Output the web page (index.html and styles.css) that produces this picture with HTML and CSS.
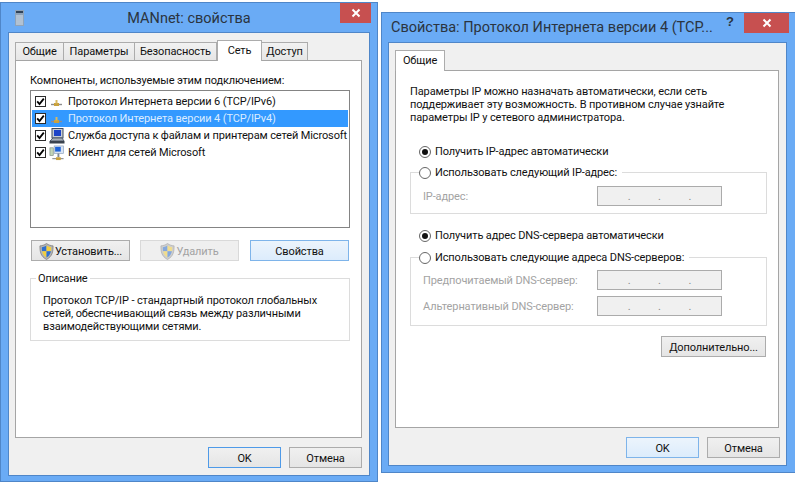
FILE: index.html
```html
<!DOCTYPE html>
<html lang="ru">
<head>
    <meta charset="UTF-8">
    <title>MANnet: свойства</title>
    <link rel="stylesheet" href="styles.css">
</head>
<body>

    <svg class="defs" width="0" height="0">
        <defs>
            <symbol id="check" viewBox="0 0 11 11">
                <rect x="0.5" y="0.5" width="10" height="10" fill="#fff" stroke="#2c2c2c"/>
                <path d="M2.2 5.4 L4.5 8 L8.8 2.6" fill="none" stroke="#000" stroke-width="1.8"/>
            </symbol>
            <symbol id="net" viewBox="0 0 16 16">
                <path d="M2 10.5 H13" stroke="#8d8d8d" stroke-width="1.4"/>
                <rect x="5" y="9" width="5" height="3" fill="#c9a13c"/>
                <rect x="6.5" y="6" width="2" height="3.5" fill="#d8b860"/>
            </symbol>
            <symbol id="pc" viewBox="0 0 16 16">
                <rect x="3" y="0.5" width="11" height="9.5" fill="#c6ccd4" stroke="#3d4a5c"/>
                <rect x="5" y="2" width="7" height="6" fill="#1c43c8"/>
                <path d="M4 10 H13 L15 13 H1 Z" fill="#a8afb8" stroke="#3d4a5c" stroke-width="0.8"/>
                <rect x="0.5" y="13" width="15" height="2.5" fill="#39424e"/>
            </symbol>
            <symbol id="client" viewBox="0 0 16 17">
                <rect x="0.5" y="3" width="3.5" height="8" fill="#c3d6b8" stroke="#7b8a80" stroke-width="0.7"/>
                <rect x="5" y="1" width="10" height="8" fill="#d8e4f4" stroke="#8ba0bb" stroke-width="0.7"/>
                <rect x="6" y="2" width="6" height="5" fill="#1d62d8"/>
                <rect x="8.5" y="9" width="2" height="4" fill="#7d8794"/>
                <path d="M3 14.5 H15" stroke="#8d8d8d" stroke-width="1.2"/>
                <rect x="7" y="13" width="5" height="3" fill="#c9a13c"/>
            </symbol>
            <symbol id="shield" viewBox="0 0 16 18">
                <path d="M8 0.5 C5.5 2.2 3.5 2.8 1 3 C1 9 1.5 14 8 17.5 C14.5 14 15 9 15 3 C12.5 2.8 10.5 2.2 8 0.5 Z" fill="#b5b5b5" stroke="#7c7c7c" stroke-width="0.8"/>
                <path d="M8 2.5 C6 3.7 4.5 4.2 3 4.4 C3 6 3 7.4 3.3 8.8 H8 Z" fill="#2d6fd0"/>
                <path d="M8 2.5 C10 3.7 11.5 4.2 13 4.4 C13 6 13 7.4 12.7 8.8 H8 Z" fill="#f3cf3e"/>
                <path d="M3.3 8.8 H8 V15.4 C5.2 13.8 3.9 11.5 3.3 8.8 Z" fill="#f3cf3e"/>
                <path d="M12.7 8.8 H8 V15.4 C10.8 13.8 12.1 11.5 12.7 8.8 Z" fill="#2d6fd0"/>
            </symbol>
            <symbol id="x" viewBox="0 0 10 10">
                <path d="M1.5 1.5 L8.5 8.5 M8.5 1.5 L1.5 8.5" stroke="#fff" stroke-width="2"/>
            </symbol>
        </defs>
    </svg>

    <div class="window window-net">
        <svg class="win-icon" width="9" height="16" viewBox="0 0 9 16">
            <rect x="0" y="0" width="9" height="16" fill="#8fa3b8"/>
            <rect x="1" y="1" width="7" height="2" fill="#2f4258"/>
            <path d="M1 6 H8 M1 8 H8 M1 10 H8 M1 12 H8 M1 14 H8" stroke="#d4e0ec" stroke-width="1"/>
        </svg>
        <div class="titlebar titlebar-center">MANnet: свойства</div>
        <div class="close close-net"><svg width="10" height="10"><use href="#x"/></svg></div>

        <div class="client client-net">
            <div class="tabs">
                <div class="tab tab-w48">Общие</div>
                <div class="tab tab-w70">Параметры</div>
                <div class="tab tab-w82">Безопасность</div>
                <div class="tab tab-active tab-w45">Сеть</div>
                <div class="tab tab-w46">Доступ</div>
            </div>
            <div class="panel panel-net">
                <p class="caption">Компоненты, используемые этим подключением:</p>
                <div class="list">
                    <div class="row">
                        <svg class="cb"><use href="#check"/></svg>
                        <svg class="row-icon"><use href="#net"/></svg>
                        <span>Протокол Интернета версии 6 (TCP/IPv6)</span>
                    </div>
                    <div class="row row-selected">
                        <svg class="cb"><use href="#check"/></svg>
                        <svg class="row-icon"><use href="#net"/></svg>
                        <span>Протокол Интернета версии 4 (TCP/IPv4)</span>
                    </div>
                    <div class="row">
                        <svg class="cb"><use href="#check"/></svg>
                        <svg class="row-icon"><use href="#pc"/></svg>
                        <span>Служба доступа к файлам и принтерам сетей Microsoft</span>
                    </div>
                    <div class="row">
                        <svg class="cb"><use href="#check"/></svg>
                        <svg class="row-icon"><use href="#client"/></svg>
                        <span>Клиент для сетей Microsoft</span>
                    </div>
                </div>
                <div class="list-buttons">
                    <div class="btn btn-list btn-shield"><svg class="shield"><use href="#shield"/></svg>Установить...</div>
                    <div class="btn btn-list btn-shield btn-disabled"><svg class="shield shield-off"><use href="#shield"/></svg>Удалить</div>
                    <div class="btn btn-list btn-focus btn-props">Свойства</div>
                </div>
                <fieldset class="group group-desc">
                    <legend class="legend-desc">Описание</legend>
                    <p>Протокол TCP/IP - стандартный протокол глобальных<br>сетей, обеспечивающий связь между различными<br>взаимодействующими сетями.</p>
                </fieldset>
            </div>
            <div class="dialog-buttons">
                <div class="btn btn-dialog btn-ok-net">OK</div>
                <div class="btn btn-dialog">Отмена</div>
            </div>
        </div>
    </div>

    <div class="window window-ip">
        <div class="titlebar titlebar-left">Свойства: Протокол Интернета версии 4 (TCP...</div>
        <div class="help">?</div>
        <div class="close close-ip"><svg width="10" height="10"><use href="#x"/></svg></div>

        <div class="client client-ip">
            <div class="tabs">
                <div class="tab tab-active tab-w50">Общие</div>
            </div>
            <div class="panel panel-ip">
                <p class="intro">Параметры IP можно назначать автоматически, если сеть<br>поддерживает эту возможность. В противном случае узнайте<br>параметры IP у сетевого администратора.</p>

                <div class="option option-first"><span class="radio radio-on"></span>Получить IP-адрес автоматически</div>
                <fieldset class="group group-ip">
                    <legend class="option"><span class="radio"></span>Использовать следующий IP-адрес:</legend>
                    <div class="field">
                        <span class="field-label">IP-адрес:</span>
                        <div class="ip-input"><i>.</i><i>.</i><i>.</i></div>
                    </div>
                </fieldset>

                <div class="option option-dns"><span class="radio radio-on"></span>Получить адрес DNS-сервера автоматически</div>
                <fieldset class="group group-dns">
                    <legend class="option"><span class="radio"></span>Использовать следующие адреса DNS-серверов:</legend>
                    <div class="field">
                        <span class="field-label">Предпочитаемый DNS-сервер:</span>
                        <div class="ip-input"><i>.</i><i>.</i><i>.</i></div>
                    </div>
                    <div class="field">
                        <span class="field-label">Альтернативный DNS-сервер:</span>
                        <div class="ip-input"><i>.</i><i>.</i><i>.</i></div>
                    </div>
                </fieldset>

                <div class="advanced-row">
                    <div class="btn btn-advanced">Дополнительно...</div>
                </div>
            </div>
            <div class="dialog-buttons">
                <div class="btn btn-dialog btn-focus btn-ok-ip">OK</div>
                <div class="btn btn-dialog">Отмена</div>
            </div>
        </div>
    </div>

</body>
</html>
```

FILE: styles.css
```css
* {
    box-sizing: border-box;
}
body {
    margin: 0;
    width: 795px;
    height: 485px;
    overflow: hidden;
    position: relative;
    background: #fff;
    color: #111;
    font-family: Roboto, "Liberation Sans", sans-serif;
    font-size: 11px;
    letter-spacing: -0.12px;
}
p {
    margin: 0;
}
.defs {
    position: absolute;
}

/* windows sit on a free desktop */
.window {
    position: absolute;
    background: #6aabf5;
    border: 1px solid #4f86c8;
}
.window-net {
    left: 0;
    top: 2px;
    width: 378px;
    height: 480px;
}
.window-ip {
    left: 381px;
    top: 12px;
    width: 415px;
    height: 461px;
}
.titlebar {
    height: 29px;
    line-height: 29px;
    font-size: 14.5px;
    letter-spacing: 0;
    color: #2b3440;
}
.titlebar-center {
    text-align: center;
    padding-top: 1px;
}
.titlebar-left {
    padding-left: 9px;
}
.win-icon {
    position: absolute;
    left: 14px;
    top: 7px;
}
.close {
    position: absolute;
    top: 0;
    height: 20px;
    background: #c75050;
    display: flex;
    align-items: center;
    justify-content: center;
}
.close-net {
    right: 6px;
    width: 31px;
}
.close-ip {
    right: 6px;
    width: 45px;
}
.help {
    position: absolute;
    left: 344px;
    top: 1px;
    font-family: "Liberation Sans", sans-serif;
    font-weight: bold;
    font-size: 13px;
    color: #2b3440;
}
.client {
    background: #f0f0f0;
    border: 1px solid #4f86c8;
    margin-left: 7px;
    padding-top: 7px;
    padding-left: 6px;
}
.client-net {
    width: 362px;
    height: 444px;
}
.client-ip {
    margin-left: 6px;
    width: 399px;
    height: 424px;
}

/* tabs */
.tabs {
    display: flex;
    height: 20px;
    align-items: flex-end;
}
.tab {
    height: 18px;
    line-height: 18px;
    text-align: center;
    border: 1px solid #acacac;
    border-bottom: none;
    border-left: none;
    background: linear-gradient(#f2f2f2, #e6e6e6);
}
.tab:first-child {
    border-left: 1px solid #acacac;
}
.tab-active {
    height: 21px;
    line-height: 20px;
    background: #fff;
    border-left: 1px solid #acacac;
    margin-bottom: -1px;
    position: relative;
    z-index: 1;
}
.tab-w48 { width: 49px; }
.tab-w70 { width: 71px; }
.tab-w82 { width: 82px; }
.tab-w45 { width: 45px; }
.tab-w46 { width: 46px; }
.tab-w50 { width: 50px; }
.panel {
    background: #fff;
    border: 1px solid #a5a5a5;
    padding-left: 14px;
}
.panel-net {
    width: 347px;
    height: 378px;
    padding-top: 13px;
}
.panel-ip {
    width: 384px;
    height: 358px;
    padding-top: 14px;
}
.caption,
.intro {
    line-height: 13px;
}

/* component list */
.list {
    width: 320px;
    height: 138px;
    margin-top: 3px;
    padding: 2px 1px;
    border: 1px solid #848484;
}
.row {
    display: flex;
    align-items: center;
    height: 17px;
    padding-left: 3px;
    white-space: nowrap;
}
.row-selected {
    background: #3399ff;
    color: #dcecff;
}
.cb {
    width: 11px;
    height: 11px;
    flex: none;
}
.row-icon {
    width: 16px;
    height: 16px;
    flex: none;
    margin: 0 3px 0 3px;
}
.list-buttons {
    display: flex;
    gap: 10px;
    margin: 12px 0 9px 1px;
}

/* buttons */
.btn {
    height: 21px;
    line-height: 19px;
    padding-top: 1px;
    text-align: center;
    border: 1px solid #acacac;
    background: linear-gradient(#f0f0f0, #e5e5e5);
    white-space: nowrap;
}
.btn-list {
    width: 99px;
}
.btn-shield {
    display: flex;
    align-items: center;
    justify-content: center;
}
.btn-disabled {
    border-color: #d9d9d9;
    background: #efefef;
    color: #a3a3a3;
}
.btn-focus {
    border-color: #7eb4ea;
    background: linear-gradient(#ecf4fc, #dcecfc);
}
.btn-props {
    margin-left: 1px;
}
.shield {
    width: 15px;
    height: 17px;
    flex: none;
    margin-right: 1px;
}
.shield-off {
    opacity: 0.55;
}
.dialog-buttons {
    display: flex;
    gap: 8px;
    justify-content: flex-end;
    margin-top: 9px;
}
.btn-dialog {
    width: 73px;
}
.btn-ok-net {
    border-color: #4e9ae8;
}
.client-net .dialog-buttons {
    margin-right: 7px;
}
.client-ip .dialog-buttons {
    margin-right: 6px;
}
.btn-advanced {
    width: 105px;
}

/* groups, legend padding-top drops the text onto the border line */
.group {
    margin: 0;
    padding: 0;
    border: 1px solid #dcdcdc;
    min-width: 0;
}
.group-desc {
    width: 320px;
    padding: 8px 8px 7px 12px;
    line-height: 13px;
}
.legend-desc {
    margin-left: -7px;
    padding: 2px 2px 0;
    line-height: 14px;
}
.group-ip {
    width: 357px;
    margin-top: 3px;
    padding: 5px 44px 7px 12px;
}
.group-dns {
    width: 357px;
    margin-top: 4px;
    padding: 4px 44px 9px 12px;
}
.option {
    display: flex;
    align-items: center;
    height: 16px;
    line-height: 16px;
    white-space: nowrap;
    padding: 0 5px 0 0;
}
legend.option {
    height: 18px;
    margin-left: -4px;
    padding-top: 2px;
}
.option-first {
    margin: 20px 0 0 9px;
}
.option-dns {
    margin: 14px 0 0 9px;
}
.radio {
    position: relative;
    width: 12px;
    height: 12px;
    flex: none;
    margin-right: 4px;
    border: 1px solid #666;
    border-radius: 50%;
    background: #fff;
}
.radio-on::after {
    content: "";
    position: absolute;
    left: 2px;
    top: 2px;
    width: 6px;
    height: 6px;
    border-radius: 50%;
    background: #111;
}
.field {
    display: flex;
    align-items: center;
    justify-content: space-between;
    height: 20px;
    color: #a3a3a3;
}
.field + .field {
    margin-top: 6px;
}
.ip-input {
    width: 125px;
    height: 20px;
    display: flex;
    justify-content: space-around;
    padding: 0 16px;
    background: #f0f0f0;
    border: 1px solid #ababab;
    line-height: 20px;
    color: #888;
}
.ip-input i {
    font-style: normal;
}
.advanced-row {
    display: flex;
    justify-content: flex-end;
    width: 356px;
    margin-top: 10px;
}
```
